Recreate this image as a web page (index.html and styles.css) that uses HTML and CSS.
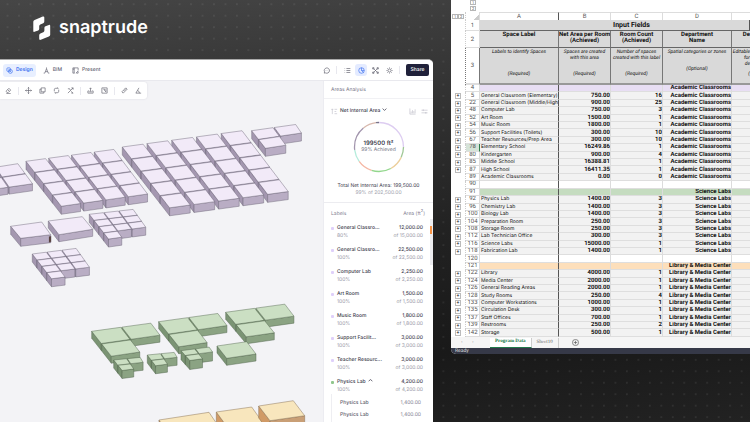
FILE: index.html
```html
<!DOCTYPE html>
<html lang="en">
<head>
<meta charset="utf-8">
<title>Snaptrude</title>
<link rel="stylesheet" href="styles.css">
</head>
<body>
<svg class="backdrop" aria-hidden="true">
  <defs>
    <pattern id="dots" x="13.3" y="-1.5" width="11.47" height="11.47" patternUnits="userSpaceOnUse">
      <circle cx="5.7" cy="5.7" r="0.7" fill="#fff" fill-opacity="0.17"/>
    </pattern>
  </defs>
  <rect width="100%" height="100%" fill="url(#dots)"/>
</svg>
<main class="page">
  <section class="left">
    <header class="brand">
      <svg class="brand-mark" viewBox="0 0 18 24" aria-hidden="true">
        <path fill="#fff" d="M1.6 4 9.8.6Q11.3 0 11.3 1.6V5.5Q11.3 6.700 10.200 7.200L7.300 8.500Q6.200 9 6.200 10.200V13Q6.200 14 5.200 14.400L1.500 15.800Q.3 16.200.3 15V5.800Q.3 4.500 1.600 4Z"/>
        <path fill="#fff" d="M15.900 8.900 12.500 10.200Q11.400 10.600 11.400 11.800V14.600Q11.400 15.700 10.300 16.200L7.400 17.400Q6.200 17.900 6.200 19.200V22.800Q6.200 24.400 7.700 23.800L15.900 20.500Q17.200 20 17.200 18.700V9.900Q17.200 8.400 15.900 8.900Z"/>
      </svg>
      <span class="brand-name">snaptrude</span>
    </header>
    <div class="app">
      <nav class="topbar">
        <button class="tab tab-active" type="button"><svg class="ic" viewBox="0 0 16 16"><rect x="2" y="2" width="8" height="8" rx="2"/><circle cx="10" cy="10" r="4.500"/><path d="M6 6l6 6"/></svg>Design</button>
        <button class="tab" type="button"><svg class="ic" viewBox="0 0 16 16"><path d="M8 1v3M8 4 4 14H1.500M8 4l4 10h2.500M5.500 10.500h5"/></svg>BIM</button>
        <button class="tab" type="button"><svg class="ic" viewBox="0 0 16 16"><path d="M14 8V2H2v12h4M2 5h3M5 2v12M9 14l5-5M10 14h4v-4"/></svg>Present</button>
        <div class="actions">
          <button class="act" type="button" aria-label="Comments"><svg class="ic" viewBox="0 0 16 16"><path d="M3 14l.5-3A6 6 0 1 1 6 13.500ZM5.500 8h.5M8 8h.5M10.500 8h.5"/></svg></button>
          <span class="rule"></span>
          <button class="act" type="button" aria-label="List"><svg class="ic" viewBox="0 0 16 16"><path d="M1.500 3.500h1M5.500 3.500h9M1.500 8h1M5.500 8h9M1.500 12.500h1M5.500 12.500h9"/></svg></button>
          <button class="act act-on" type="button" aria-label="Areas"><svg class="ic" viewBox="0 0 16 16"><circle cx="8" cy="8" r="6.300"/><path d="M8 1.700V8l4.500 4.500M8 8h6"/></svg></button>
          <button class="act" type="button" aria-label="Graph"><svg class="ic" viewBox="0 0 16 16"><path d="M4 4l8 8M12 4l-8 8"/><path d="M1.500 1.500h3v3h-3zM11.500 1.500h3v3h-3zM1.500 11.500h3v3h-3zM11.500 11.500h3v3h-3z"/></svg></button>
          <button class="act" type="button" aria-label="Settings"><svg class="ic" viewBox="0 0 16 16"><circle cx="8" cy="8" r="3.500"/><path d="M8 1v2M8 13v2M1 8h2M13 8h2M3 3l1.500 1.500M11.500 11.500 13 13M13 3l-1.500 1.500M4.500 11.500 3 13"/></svg></button>
          <span class="rule"></span>
          <button class="share" type="button">Share</button>
        </div>
      </nav>
      <div class="work">
        <div class="canvas">
          <svg class="model" id="model" viewBox="0 81 324 341" preserveAspectRatio="xMinYMin slice" role="img" aria-label="Building model"></svg>
          <div class="tools">
            <button type="button" aria-label="Erase"><svg class="ic" viewBox="0 0 16 16"><path d="M3 9l6-6 4 4-6 6H5L3 11ZM3 15h10M6 6l4 4"/></svg></button>
            <span class="rule"></span>
            <button type="button" aria-label="Move"><svg class="ic" viewBox="0 0 16 16"><path d="M8 1v14M1 8h14M6 3l2-2 2 2M6 13l2 2 2-2M3 6 1 8l2 2M13 6l2 2-2 2"/></svg></button>
            <button type="button" aria-label="Copy"><svg class="ic" viewBox="0 0 16 16"><path d="M5 2h9v9H5zM5 5H2v9h9v-3"/></svg></button>
            <button type="button" aria-label="Rotate"><svg class="ic" viewBox="0 0 16 16"><path d="M3 10V6q0-3 3-3h6l-2-2M13 6v4q0 3-3 3H4l2 2"/></svg></button>
            <button type="button" aria-label="Scale"><svg class="ic" viewBox="0 0 16 16"><path d="M2 4h4l2 4 6-6M10 2h4v4M8 8l-6 6M9 10l5 4M10 14h4"/></svg></button>
            <span class="rule"></span>
            <button type="button" aria-label="Push pull"><svg class="ic" viewBox="0 0 16 16"><path d="M8 2v8M6 4l2-2 2 2M5 9H2v5h12V9h-3M5 11h6"/></svg></button>
            <button type="button" aria-label="Offset"><svg class="ic" viewBox="0 0 16 16"><path d="M2 2h12v12H2zM5 5h3v3M8 8l3 3M11 5v6"/></svg></button>
            <span class="rule"></span>
            <button type="button" aria-label="Measure"><svg class="ic" viewBox="0 0 16 16"><path d="M2 11 11 2l3 3-9 9ZM6 7l2 2M9 4l2 2"/></svg></button>
            <button type="button" aria-label="Angle"><svg class="ic" viewBox="0 0 16 16"><path d="M9 2 2 14h12M6 8q4 1 4 6"/></svg></button>
          </div>
        </div>
        <aside class="panel">
          <h2 class="panel-title">Areas Analysis</h2>
          <div class="summary">
            <div class="metric">
              <svg class="ic pale" viewBox="0 0 16 16"><path d="M3 2v12M1 4l2-2 2 2M8 3h6M8 8h4M8 13h6"/></svg>
              <button class="metric-name" type="button">Net Internal Area<svg class="chev" viewBox="0 0 8 8"><path d="M1 2.500 4 5.500 7 2.500"/></svg></button>
              <svg class="ic pale" viewBox="0 0 16 16"><path d="M2 1v13h13M5 12V8M8 12V5M11 12V7M14 12V3"/></svg>
              <svg class="ic pale" viewBox="0 0 16 16"><path d="M1 5h14M1 11h14M5 3v4M11 9v4"/></svg>
            </div>
            <div class="donut">
              <svg class="ring" viewBox="0 0 52 52" aria-hidden="true">
                <g fill="none" stroke-width="1.300">
                  <circle cx="26" cy="26" r="24.500" pathLength="100" stroke="#ddcdf1" stroke-dasharray="25 75" stroke-dashoffset="25"/>
                  <circle cx="26" cy="26" r="24.500" pathLength="100" stroke="#9fc795" stroke-dasharray="7 93" stroke-dashoffset="0"/>
                  <circle cx="26" cy="26" r="24.500" pathLength="100" stroke="#eccf9c" stroke-dasharray="10 90" stroke-dashoffset="-7"/>
                  <circle cx="26" cy="26" r="24.500" pathLength="100" stroke="#93d78d" stroke-dasharray="13 87" stroke-dashoffset="-17"/>
                  <circle cx="26" cy="26" r="24.500" pathLength="100" stroke="#f5b7a4" stroke-dasharray="10 90" stroke-dashoffset="-30"/>
                  <circle cx="26" cy="26" r="24.500" pathLength="100" stroke="#b5ecdc" stroke-dasharray="8 92" stroke-dashoffset="-40"/>
                  <circle cx="26" cy="26" r="24.500" pathLength="100" stroke="#a295ad" stroke-dasharray="16 84" stroke-dashoffset="-48"/>
                  <circle cx="26" cy="26" r="24.500" pathLength="100" stroke="#d8b9ae" stroke-dasharray="9 91" stroke-dashoffset="-64"/>
                  <circle cx="26" cy="26" r="24.500" pathLength="100" stroke="#777389" stroke-dasharray="2 98" stroke-dashoffset="-73"/>
                </g>
              </svg>
              <div class="donut-text"><strong>199500 ft²</strong><span>99% Achieved</span></div>
            </div>
            <p class="total">Total Net Internal Area: 199,500.00<span>99% of 202,500.00</span></p>
          </div>
          <div class="labels">
            <div class="labels-head"><span>Labels</span><span>Area (ft<sup>2</sup>)</span></div>
            <ul class="list">
              <li><i></i><b>General Classro...</b><b>12,000.00</b><span>80%</span><span>of 15,000.00</span></li>
              <li><i></i><b>General Classro...</b><b>22,500.00</b><span>100%</span><span>of 22,500.00</span></li>
              <li><i></i><b>Computer Lab</b><b>2,250.00</b><span>100%</span><span>of 2,250.00</span></li>
              <li><i></i><b>Art Room</b><b>1,500.00</b><span>100%</span><span>of 1,500.00</span></li>
              <li><i></i><b>Music Room</b><b>1,800.00</b><span>100%</span><span>of 1,800.00</span></li>
              <li><i></i><b>Support Facilit...</b><b>3,000.00</b><span>100%</span><span>of 3,000.00</span></li>
              <li><i></i><b>Teacher Resourc...</b><b>3,000.00</b><span>100%</span><span>of 3,000.00</span></li>
              <li class="green"><i></i><b>Physics Lab<svg class="chev" viewBox="0 0 8 8"><path d="M1 5 4 2.500 7 5"/></svg></b><b>4,200.00</b><span>100%</span><span>of 4,200.00</span></li>
            </ul>
            <ul class="sub">
              <li><b>Physics Lab</b><span>1,400.00</span></li>
              <li><b>Physics Lab</b><span>1,400.00</span></li>
            </ul>
          </div>
          <span class="scroll"></span>
        </aside>
      </div>
    </div>
  </section>
  <section class="book">
    <div class="levels"><button type="button">1</button><button type="button">2</button></div>
    <table class="sheet">
      <colgroup><col class="c-out"><col class="c-num"><col class="c-a"><col class="c-b"><col class="c-c"><col class="c-d"><col></colgroup>
      <thead>
        <tr class="letters"><td class="out"><button type="button">1</button><button type="button">2</button></td><td class="num corner"></td><th>A</th><th>B</th><th>C</th><th>D</th><th></th></tr>
        <tr class="r1"><td class="out"></td><td class="num">1</td><th class="fields" colspan="5">Input Fields</th></tr>
        <tr class="r2"><td class="out"></td><td class="num">2</td><th>Space Label</th><th>Net Area per Room<br>(Achieved)</th><th>Room Count<br>(Achieved)</th><th>Department<br>Name</th><th class="edge">De</th></tr>
        <tr class="r3"><td class="out"></td><td class="num">3</td><td><p>Labels to identify Spaces</p><p class="n3">(Required)</p></td><td><p>Spaces are created with this area</p><p class="n2">(Required)</p></td><td><p>Number of spaces<br>created with this label</p><p class="n2">(Required)</p></td><td><p>Spatial categories or zones</p><p class="n1">(Optional)</p></td><td class="edge"><p>Editable<br>for<br>de</p><p class="n0">(</p></td></tr>
      </thead>
      <tbody id="rows"></tbody>
    </table>
    <footer class="tabs">
      <span class="arrow">‹</span><span class="arrow">›</span>
      <button class="sheet-tab on" type="button">Program Data</button>
      <button class="sheet-tab" type="button">Sheet10</button>
      <button class="add" type="button" aria-label="Add sheet"><svg class="ic" viewBox="0 0 16 16"><circle cx="8" cy="8" r="7"/><path d="M8 4v8M4 8h8"/></svg></button>
    </footer>
    <div class="status">Ready</div>
  </section>
</main>
<script src="main.js"></script>
</body>
</html>
```
FILE: styles.css
```css
* { box-sizing: border-box; margin: 0; padding: 0; }
body {
  height: 100vh;
  overflow: hidden;
  position: relative;
  background: linear-gradient(174deg, #464646 0%, #3a3a3a 16%, #222 55%, #191919 80%, #222 100%);
  font-family: Inter, "Liberation Sans", sans-serif;
  font-size: 5px;
  line-height: 8px;
  color: #3c3b4c;
  text-rendering: geometricPrecision;
}
button { border: 0; background: none; font: inherit; color: inherit; text-rendering: inherit; }
ul { list-style: none; }
.backdrop { position: absolute; inset: 0; width: 100%; height: 100%; }
.page {
  position: relative;
  display: grid;
  grid-template-columns: 433fr 299fr;
  gap: 18px;
  height: 100%;
}
.left { display: flex; flex-direction: column; min-width: 0; min-height: 0; }
.brand { display: flex; align-items: center; gap: 8px; height: 59px; padding: 0 0 3px 33px; flex: none; }
.brand-mark { width: 18px; height: 24px; }
.brand-name { font-size: 18px; line-height: 24px; font-weight: 600; color: #fff; padding-bottom: 1px; }

.ic { width: 7px; height: 7px; fill: none; stroke: currentColor; stroke-width: 1.5; flex: none; display: block; }
.chev { width: 5px; height: 5px; fill: none; stroke: currentColor; stroke-width: 1.2; margin-left: 2px; }
.rule { width: 1px; height: 8px; background: #e8e8ee; }

.app {
  flex: 1;
  min-height: 0;
  display: flex;
  flex-direction: column;
  background: #f3f3f6;
  border-top: 1px solid #aaa;
  border-radius: 0 5px 0 0;
  overflow: hidden;
}
.topbar {
  display: flex;
  align-items: center;
  gap: 4px;
  height: 21px;
  flex: none;
  padding: 0 4px 0 3px;
  background: #fff;
  border-bottom: 1px solid #e9e9ee;
}
.tab { display: flex; align-items: center; gap: 3px; height: 13px; padding: 0 3px; border-radius: 3px; font-weight: 500; color: #60606f; }
.tab-active { background: #e8efff; color: #3a6ff0; font-weight: 600; }
.actions { margin-left: auto; display: flex; align-items: center; gap: 2px; color: #5a5a68; }
.actions .rule { margin: 0 2px; }
.act { display: grid; place-items: center; width: 12px; height: 12px; border-radius: 3px; }
.act-on { background: #e4ebff; color: #3a6ff0; }
.share { width: 23px; height: 12px; margin-left: 2px; border-radius: 2px; background: #20213a; color: #fff; font-weight: 500; }

.work { flex: 1; min-height: 0; display: grid; grid-template-columns: 1fr 110px; }
.canvas { position: relative; min-width: 0; overflow: hidden; }
.model { display: block; width: 100%; height: 100%; }
.tools {
  position: absolute;
  top: 1px;
  left: 0;
  display: flex;
  align-items: center;
  gap: 7px;
  height: 17px;
  padding: 0 5px;
  background: #fff;
  border-radius: 0 3px 3px 0;
  box-shadow: 0 0 2px #d8d8e0;
  color: #62616e;
}
.tools .rule { margin: 0 -1px; }

.panel { position: relative; background: #fff; border-left: 1px solid #ececf1; min-height: 0; overflow: hidden; }
.panel-title { height: 18px; padding: 5px 7px; font-size: 5px; line-height: 8px; font-weight: 400; color: #777688; border-bottom: 1px solid #f1f1f4; }
.summary { border-bottom: 1px solid #ececf0; height: 104px; padding-top: 8px; }
.metric { display: flex; align-items: center; gap: 5px; padding: 0 5px 0 7px; }
.metric-name { margin-right: auto; font-weight: 500; margin-left: -3px; }
.pale { color: #a2a1b0; stroke-width: 1; }
.donut { position: relative; width: 52px; height: 52px; margin: 6px auto 0; }
.ring { display: block; width: 52px; height: 52px; }
.donut-text { position: absolute; inset: 0; display: flex; flex-direction: column; align-items: center; justify-content: center; }
.donut-text strong { font-size: 6px; line-height: 7px; font-weight: 500; color: #232232; white-space: nowrap; }
.donut-text span { line-height: 7px; color: #747384; white-space: nowrap; }
.total { text-align: center; margin-top: 10px; line-height: 7px; white-space: nowrap; }
.total span { display: block; color: #a09fad; }
.labels { padding: 7px 10px 0 7px; }
.labels-head { display: flex; justify-content: space-between; color: #858494; margin-right: -2px; }
.labels-head sup { font-size: 4px; line-height: 0; }
.list li { display: grid; grid-template-columns: 6px 1fr auto; height: 22px; padding-top: 6px; align-content: start; }
.list i { width: 3px; height: 3px; margin-top: 3px; border-radius: 1px; background: #dfd0fa; }
.list .green i { background: #90c68c; }
.list b { font-weight: 500; }
.list span { color: #9a99a8; }
.list span:nth-of-type(1) { grid-column: 2; }
.list b:nth-of-type(2), .list span:nth-of-type(2) { text-align: right; }
.sub { border-left: 1px solid #eeeef2; padding: 5px 2px 0 8px; }
.sub li { display: flex; justify-content: space-between; height: 12px; line-height: 9px; }
.sub b { font-weight: 500; color: #5f5e6e; }
.sub span { color: #858494; }
.scroll { position: absolute; right: 0; top: 138px; width: 3px; height: 46px; border: solid #ededf0; border-width: 7px 1px 31px 0; background: #f79446; }

.book {
  align-self: start;
  min-width: 0;
  overflow: hidden;
  background: #fff;
  border-radius: 0 0 0 5px;
  font-family: Roboto, "Liberation Sans", sans-serif;
  color: #111;
}
.levels { display: flex; flex-direction: column; gap: 1px; height: 12px; padding-left: 19px; }
.levels button, .letters button { width: 6px; height: 5px; border: 1px solid #b6b6b6; font-size: 4px; line-height: 3px; color: #555; vertical-align: top; }
.sheet { width: 100%; height: 325px; table-layout: fixed; border-collapse: separate; border-spacing: 0; font-size: 6px; line-height: 7px; }
.c-out { width: 15px; }
.c-num { width: 14px; }
.c-a { width: 79px; }
.c-b { width: 52px; }
.c-c { width: 52px; }
.c-d { width: 69px; }
.sheet th, .sheet td { vertical-align: middle; overflow: hidden; white-space: nowrap; border-right: 1px solid #dcdcdc; }
.sheet tr > :nth-child(7) { border-right: 0; }
.sheet .out { border-right: 1px dotted #ccc; text-align: center; background: #fff; font-size: 5px; line-height: 5px; }
.sheet .num { text-align: center; color: #555; background: #fff; font-weight: 400; }
.sheet tr > :nth-child(3) { border-right-color: #555; }
.letters { height: 8px; }
.letters th { font-weight: 400; color: #555; border-top: 1px solid #ddd; }
.sheet .corner { background: linear-gradient(135deg, #fff 75%, #ccc 76%); }
.r1 { height: 11px; }
.r2 { height: 17px; }
.r3 { height: 37px; }
.r1 th, .r2 th, .r3 td { background: #d9d9d9; }
.sheet .r1 > *, .sheet .r2 > * { border-bottom: 1px solid #666; }
.sheet .r3 > * { border-bottom: 2px solid #999; }
.sheet .r1 .num, .sheet .r2 .num, .sheet .r3 .num { background: #fff; border-bottom-color: #ddd; }
.sheet .r1 .out, .sheet .r2 .out, .sheet .r3 .out { background: #fff; border-bottom: 0; }
.sheet .fields { font-size: 7px; padding-left: 34px; }
.sheet .r2 th, .sheet .r3 td { border-right-color: #777; }
.sheet .r2 th { vertical-align: top; line-height: 6px; padding-top: 1px; }
.sheet .r3 td { vertical-align: top; padding-top: 1px; font-size: 5px; line-height: 6px; font-style: italic; text-align: center; white-space: normal; }
.sheet .r3 .num { vertical-align: middle; font-size: 6px; font-style: normal; }
.sheet tr .edge.edge { text-align: right; }
.n3 { margin-top: 16px; }
.n2 { margin-top: 10px; }
.n1 { margin-top: 11px; }
.n0 { margin-top: 4px; }
.sheet tbody td { background: #f2f2f2; border-bottom: 1px solid #dedede; line-height: 6px; }
.sheet tbody .out { border-bottom: 0; background: #fff; }
.sheet tbody .name { padding-left: 1px; font-family: Inter, "Liberation Sans", sans-serif; font-size: 5px; }
.sheet tbody .val { text-align: right; font-weight: 700; }
.sheet tbody .blank td { background: #fff; }
.sheet tbody .lilac td { background: #e8def4; }
.sheet tbody .mint td { background: #c5dcc0; }
.sheet tbody .peach td { background: #fddfbb; }
.sheet tbody tr .out.out, .sheet tbody tr .num.num { background: #fff; }
.sheet tbody .picked .num.num { background: #d5e3d8; border-right-color: #2f7d4d; }
.plus { display: block; width: 6px; height: 6px; margin: 0 auto; border: 1px solid #bbb; font-size: 5px; line-height: 4px; }
.tabs { display: flex; align-items: center; height: 11px; background: #f5f5f5; font-family: "Liberation Serif", serif; font-size: 5px; padding-left: 10px; }
.arrow { width: 11px; color: #999; }
.sheet-tab { height: 10px; padding: 0 5px; color: #666; border-right: 1px solid #ccc; }
.sheet-tab.on { margin-left: 7px; background: #fff; color: #217a4b; font-weight: 700; border-bottom: 1px solid #217a4b; }
.add { margin-left: 13px; color: #555; }
.status { height: 6px; padding-left: 4px; background: #363948; color: #ddd; font-size: 5px; line-height: 6px; }
```
FILE: main.js
```js
const SVG = "http://www.w3.org/2000/svg";
const model = document.getElementById("model");

const palettes = {
  lilac: { top: "#f2eaf8", front: "#b9adc4", side: "#a497b0", line: "#6a6274" },
  green: { top: "#cbdfc3", front: "#8ba383", side: "#7b9474", line: "#4e6349" },
  amber: { top: "#f8e6bd", front: "#c99f76", side: "#d09a66", line: "#80684a" }
};

// corners: back-left, back-right, front-right, front-left of the top plane
// rows: how many blocks each row holds
const groups = [
  { p: "lilac", c: [[-28, 171], [19, 163.500], [34, 184], [-15, 191]], cols: 2, rows: [2, 2], h: 7, g: 0.05 },
  { p: "lilac", c: [[26, 161.300], [117, 149], [151, 194], [61.700, 206.700]], cols: 4, rows: [4, 4, 4, 4], h: 8, g: 0.14 },
  { p: "lilac", c: [[122.300, 147], [246, 130.200], [292.500, 191.500], [170, 208.300]], cols: 5, rows: [5, 5, 5, 5, 5], h: 8, g: 0.16 },
  { p: "lilac", c: [[251.700, 130.700], [297, 124.300], [309, 142], [265.700, 148.700]], cols: 2, rows: [2, 1], h: 8, g: 0.06 },
  { p: "lilac", c: [[10.700, 226.300], [41.700, 222], [50.700, 234.700], [20.700, 238.300]], cols: 1, rows: [1], h: 8, g: 0 },
  { p: "lilac", c: [[48.300, 221], [82.300, 216.700], [92.700, 229.300], [59, 234.700]], cols: 1, rows: [1], h: 7, g: 0 },
  { p: "lilac", c: [[89.300, 214.300], [134, 209.300], [151, 233.300], [108.700, 239.300]], cols: 3, rows: [3, 3, 3, 1], h: 8, g: 0.06 },
  { p: "lilac", c: [[32.300, 254], [77, 248.300], [95, 273.700], [51.700, 279]], cols: 3, rows: [3, 3, 3, 1], h: 8, g: 0.06 },
  { p: "green", c: [[91.700, 331.300], [152, 323], [171, 348], [111.700, 356.700]], cols: 2, rows: [2, 1], h: 7, g: 0.04 },
  { p: "green", c: [[158.700, 321.700], [219, 313.300], [238, 338.500], [179.300, 347.300]], cols: 2, rows: [2, 1], h: 7, g: 0.04 },
  { p: "green", c: [[225.700, 312.300], [286, 304], [305, 329], [246.700, 337.300]], cols: 2, rows: [2, 1], h: 7, g: 0.04 },
  { p: "green", c: [[217, 346], [246.700, 341.700], [256, 354], [226.700, 358.300]], cols: 1, rows: [1], h: 7, g: 0 },
  { p: "green", c: [[113.700, 360], [141, 357.300], [147, 367.500], [122.300, 370.700]], cols: 2, rows: [2, 1], h: 8, g: 0.06 },
  { p: "green", c: [[147.300, 355], [175, 352.300], [181, 362.500], [155.700, 366]], cols: 2, rows: [2, 1], h: 8, g: 0.06 },
  { p: "green", c: [[181, 350.700], [210, 347], [217, 357], [190, 360.700]], cols: 2, rows: [2, 1], h: 9, g: 0.06 },
  { p: "amber", c: [[159, 420], [209, 412.300], [221, 430], [171, 437]], cols: 1, rows: [1], h: 12, g: 0 },
  { p: "amber", c: [[216.300, 412], [251.700, 407], [263, 423], [228, 428]], cols: 1, rows: [1], h: 12, g: 0 },
  { p: "amber", c: [[258.700, 406], [293.300, 400.700], [304.700, 415.700], [270, 420.700]], cols: 1, rows: [1], h: 12, g: 0 }
];

function face(points, fill, line) {
  const el = document.createElementNS(SVG, "polygon");
  el.setAttribute("points", points.map(p => p.join(",")).join(" "));
  el.setAttribute("fill", fill);
  el.setAttribute("stroke", line);
  el.setAttribute("stroke-width", "0.45");
  el.setAttribute("stroke-linejoin", "round");
  model.appendChild(el);
}

function at(c, u, v) {
  return [0, 1].map(k =>
    (1 - u) * (1 - v) * c[0][k] + u * (1 - v) * c[1][k] + u * v * c[2][k] + (1 - u) * v * c[3][k]);
}

for (const { p, c, cols, rows, h, g } of groups) {
  const pal = palettes[p];
  const down = q => [q[0], q[1] + h];
  rows.forEach((count, r) => {
    for (let i = count - 1; i >= 0; i--) {
      const u0 = i / cols, u1 = (i + 1 - g) / cols;
      const v0 = r / rows.length, v1 = (r + 1 - (rows.length > 1 ? 0.04 : 0)) / rows.length;
      const A = at(c, u0, v0), B = at(c, u1, v0), C = at(c, u1, v1), D = at(c, u0, v1);
      face([A, D, down(D), down(A)], pal.side, pal.line);
      face([D, C, down(C), down(D)], pal.front, pal.line);
      face([A, B, C, D], pal.top, pal.line);
    }
  });
}
face([[49, 236.500], [51, 236], [51, 242], [49, 242.500]], "#4a3027", "#8e8394");

const AC = "Academic Classrooms", SL = "Science Labs", LM = "Library & Media Center";
const rows = [
  [4, "", "", "", AC, "lilac"],
  [5, "General Classroom (Elementary)", "750.00", 16, AC],
  [22, "General Classroom (Middle/High", "900.00", 25, AC],
  [48, "Computer Lab", "750.00", 3, AC],
  [52, "Art Room", "1500.00", 1, AC],
  [54, "Music Room", "1800.00", 1, AC],
  [56, "Support Facilities (Toilets)", "300.00", 10, AC],
  [67, "Teacher Resources/Prep Area", "300.00", 10, AC],
  [78, "Elementary School", "16249.86", 1, AC, "picked"],
  [80, "Kindergarten", "900.00", 4, AC],
  [85, "Middle School", "16388.81", 1, AC],
  [87, "High School", "16411.35", 1, AC],
  [89, "Academic Classrooms", "0.00", 0, AC, "plain"],
  [90, "", "", "", "", "blank"],
  [91, "", "", "", SL, "mint"],
  [92, "Physics Lab", "1400.00", 3, SL],
  [96, "Chemistry Lab", "1400.00", 3, SL],
  [100, "Biology Lab", "1400.00", 3, SL],
  [104, "Preparation Room", "250.00", 3, SL],
  [108, "Storage Room", "250.00", 3, SL],
  [112, "Lab Technician Office", "300.00", 3, SL],
  [116, "Science Labs", "15000.00", 1, SL],
  [118, "Fabrication Lab", "1400.00", 1, SL],
  [120, "", "", "", "", "blank"],
  [121, "", "", "", LM, "peach"],
  [122, "Library", "4000.00", 1, LM],
  [124, "Media Center", "2000.00", 1, LM],
  [126, "General Reading Areas", "2000.00", 1, LM],
  [128, "Study Rooms", "250.00", 4, LM],
  [133, "Computer Workstations", "1000.00", 1, LM],
  [135, "Circulation Desk", "300.00", 1, LM],
  [137, "Staff Offices", "700.00", 1, LM],
  [139, "Restrooms", "250.00", 2, LM],
  [142, "Storage", "500.00", 1, LM]
];

const body = document.getElementById("rows");
for (const [num, name, area, count, dept, kind = ""] of rows) {
  const tr = body.insertRow();
  tr.className = kind;
  const cell = (text, cls) => {
    const td = tr.insertCell();
    td.textContent = text;
    td.className = cls;
    return td;
  };
  const out = cell("", "out");
  if (name && kind !== "plain") {
    const b = document.createElement("button");
    b.type = "button";
    b.className = "plus";
    b.textContent = "+";
    out.appendChild(b);
  }
  cell(num, "num");
  cell(name, "name");
  cell(area, "val");
  cell(count, "val");
  cell(dept, "val");
  cell("", "");
}
```
